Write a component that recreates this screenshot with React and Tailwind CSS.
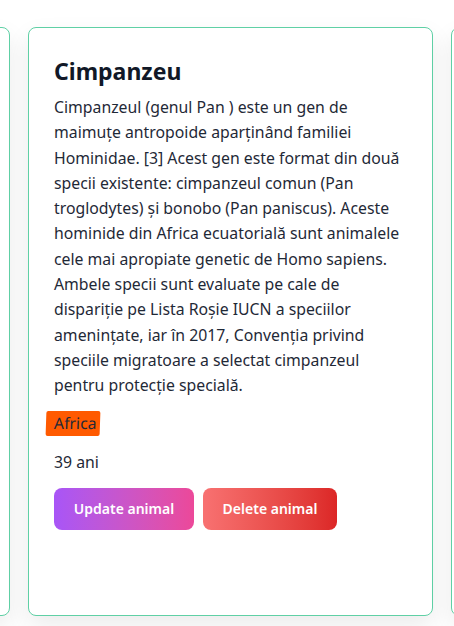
const Card = ({ children }) => (
  <div className="w-[405px] shrink-0 h-[589px] rounded-lg border border-[#5fd0a5] bg-white shadow-[0_10px_25px_rgba(0,0,0,0.08)]">
    {children}
  </div>
);

const lines = [
  'Cimpanzeul (genul Pan ) este un gen de',
  'maimuțe antropoide aparținând familiei',
  'Hominidae. [3] Acest gen este format din două',
  'specii existente: cimpanzeul comun (Pan',
  'troglodytes) și bonobo (Pan paniscus). Aceste',
  'hominide din Africa ecuatorială sunt animalele',
  'cele mai apropiate genetic de Homo sapiens.',
  'Ambele specii sunt evaluate pe cale de',
  'dispariție pe Lista Roșie IUCN a speciilor',
  'amenințate, iar în 2017, Convenția privind',
  'speciile migratoare a selectat cimpanzeul',
  'pentru protecție specială.',
];

export default function App() {
  return (
    <div
      className="w-[454px] h-[626px] overflow-hidden bg-white"
      style={{ fontFamily: '"Noto Sans", "Open Sans", sans-serif' }}
    >
      <div className="flex gap-[18px] -ml-[395px] pt-[27px]">
        <Card />
        <Card>
          <div className="pl-[25px] pr-[18px] pt-[26px]">
            <h2 className="text-[23px] font-bold text-[#111827] leading-[34px]">Cimpanzeu</h2>
            <p className="mt-[7px] text-[15.8px] leading-[25.3px] text-[#1f2937]">
              {lines.map((l) => (
                <span key={l} className="block whitespace-nowrap">
                  {l}
                </span>
              ))}
            </p>
            <div className="mt-[12px]">
              <span className="inline-block -ml-[8px] pl-[8px] pr-[3px] bg-[#ff5a00] text-[15.8px] leading-[25px] text-[#1f2937] rounded-[2px] -skew-x-2">
                Africa
              </span>
            </div>
            <p className="mt-[14px] text-[15.8px] leading-[25px] text-[#1f2937]">39 ani</p>
            <div className="mt-[13px] flex gap-[9px]">
              <button className="h-[42px] w-[140px] rounded-lg bg-gradient-to-r from-[#a855f7] to-[#ec4899] text-white font-semibold text-[14px]">
                Update animal
              </button>
              <button className="h-[42px] w-[134px] rounded-lg bg-gradient-to-r from-[#f87171] to-[#dc2626] text-white font-semibold text-[14px]">
                Delete animal
              </button>
            </div>
          </div>
        </Card>
        <Card />
      </div>
    </div>
  );
}
